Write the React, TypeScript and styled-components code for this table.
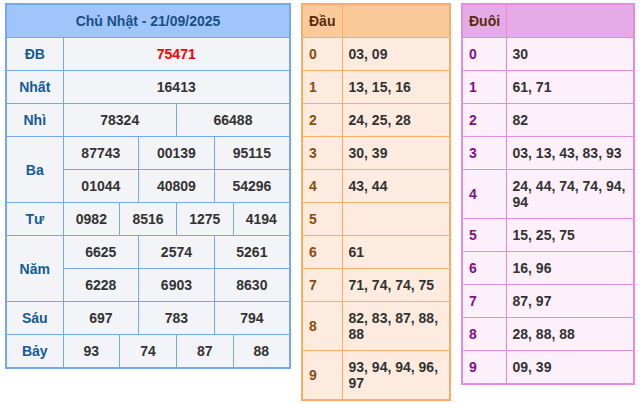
import styled, { createGlobalStyle } from 'styled-components'

const GlobalStyle = createGlobalStyle`
  html, body {
    margin: 0;
    padding: 0;
    background: #fff;
    font-family: "Liberation Sans", Arial, sans-serif;
  }
`;

const Page = styled.div`
  display: flex;
  align-items: flex-start;
  gap: 10px;
  padding: 3px 5px;
`;

interface Palette {
  line: string;
  head: string;
  body: string;
}

const blue: Palette = { line: '#74a8f4', head: '#9fc5fb', body: '#f3f4f8' };
const orange: Palette = { line: '#f8ad65', head: '#fbca9b', body: '#fdebdf' };
const pink: Palette = { line: '#e68ce0', head: '#e5abe6', body: '#fdf0fb' };

const Table = styled.table<{ $p: Palette; $w: number }>`
  width: ${({ $w }) => $w}px;
  table-layout: fixed;
  border-collapse: collapse;
  border: 2px solid ${({ $p }) => $p.line};
  background: ${({ $p }) => $p.body};
  font-size: 14px;
  line-height: 16px;
  font-weight: bold;

  th, td {
    border: 1px solid ${({ $p }) => $p.line};
    padding: 8px 6px;
  }
  th {
    background: ${({ $p }) => $p.head};
  }
`;

const Title = styled.th`
  color: #1b4e86;
  text-align: center;
`;

const Label = styled.td`
  color: #155a99;
  text-align: center;
`;

const Num = styled.td<{ $red?: boolean }>`
  color: ${({ $red }) => ($red ? '#ff0000' : '#333')};
  text-align: center;
  padding-left: 2px !important;
  padding-right: 2px !important;
`;

const HeadCell = styled.th`
  color: #5a2a0c;
  text-align: left;
`;

const Key = styled.td<{ $color: string }>`
  color: ${({ $color }) => $color};
  text-align: left;
`;

const List = styled.td`
  color: #333;
  text-align: left;
`;

const prizes: { label: string; rows: string[][]; red?: boolean }[] = [
  { label: 'ĐB', rows: [['75471']], red: true },
  { label: 'Nhất', rows: [['16413']] },
  { label: 'Nhì', rows: [['78324', '66488']] },
  { label: 'Ba', rows: [['87743', '00139', '95115'], ['01044', '40809', '54296']] },
  { label: 'Tư', rows: [['0982', '8516', '1275', '4194']] },
  { label: 'Năm', rows: [['6625', '2574', '5261'], ['6228', '6903', '8630']] },
  { label: 'Sáu', rows: [['697', '783', '794']] },
  { label: 'Bảy', rows: [['93', '74', '87', '88']] },
];

const dau = [
  '03, 09',
  '13, 15, 16',
  '24, 25, 28',
  '30, 39',
  '43, 44',
  '',
  '61',
  '71, 74, 74, 75',
  '82, 83, 87, 88, 88',
  '93, 94, 94, 96, 97',
];

const duoi = [
  '30',
  '61, 71',
  '82',
  '03, 13, 43, 83, 93',
  '24, 44, 74, 74, 94, 94',
  '15, 25, 75',
  '16, 96',
  '87, 97',
  '28, 88, 88',
  '09, 39',
];

function ResultTable() {
  return (
    <Table $p={blue} $w={286}>
      <colgroup>
        <col style={{ width: 57 }} />
        {Array.from({ length: 12 }).map((_, i) => (
          <col key={i} />
        ))}
      </colgroup>
      <thead>
        <tr>
          <Title colSpan={13}>Chủ Nhật - 21/09/2025</Title>
        </tr>
      </thead>
      <tbody>
        {prizes.map(p =>
          p.rows.map((row, ri) => (
            <tr key={p.label + ri}>
              {ri === 0 && <Label rowSpan={p.rows.length}>{p.label}</Label>}
              {row.map((n, ni) => (
                <Num key={ni} colSpan={12 / row.length} $red={p.red}>
                  {n}
                </Num>
              ))}
            </tr>
          ))
        )}
      </tbody>
    </Table>
  );
}

function LotoTable({ title, items, p, w, keyW, keyColor }: {
  title: string;
  items: string[];
  p: Palette;
  w: number;
  keyW: number;
  keyColor: string;
}) {
  return (
    <Table $p={p} $w={w}>
      <colgroup>
        <col style={{ width: keyW }} />
        <col />
      </colgroup>
      <thead>
        <tr>
          <HeadCell>{title}</HeadCell>
          <HeadCell></HeadCell>
        </tr>
      </thead>
      <tbody>
        {items.map((v, i) => (
          <tr key={i}>
            <Key $color={keyColor}>{i}</Key>
            <List>{v}</List>
          </tr>
        ))}
      </tbody>
    </Table>
  );
}

export default function App() {
  return (
    <>
      <GlobalStyle />
      <Page>
        <ResultTable />
        <LotoTable title="Đầu" items={dau} p={orange} w={150} keyW={40} keyColor="#8f4a0c" />
        <LotoTable title="Đuôi" items={duoi} p={pink} w={174} keyW={44} keyColor="#82108a" />
      </Page>
    </>
  );
}
